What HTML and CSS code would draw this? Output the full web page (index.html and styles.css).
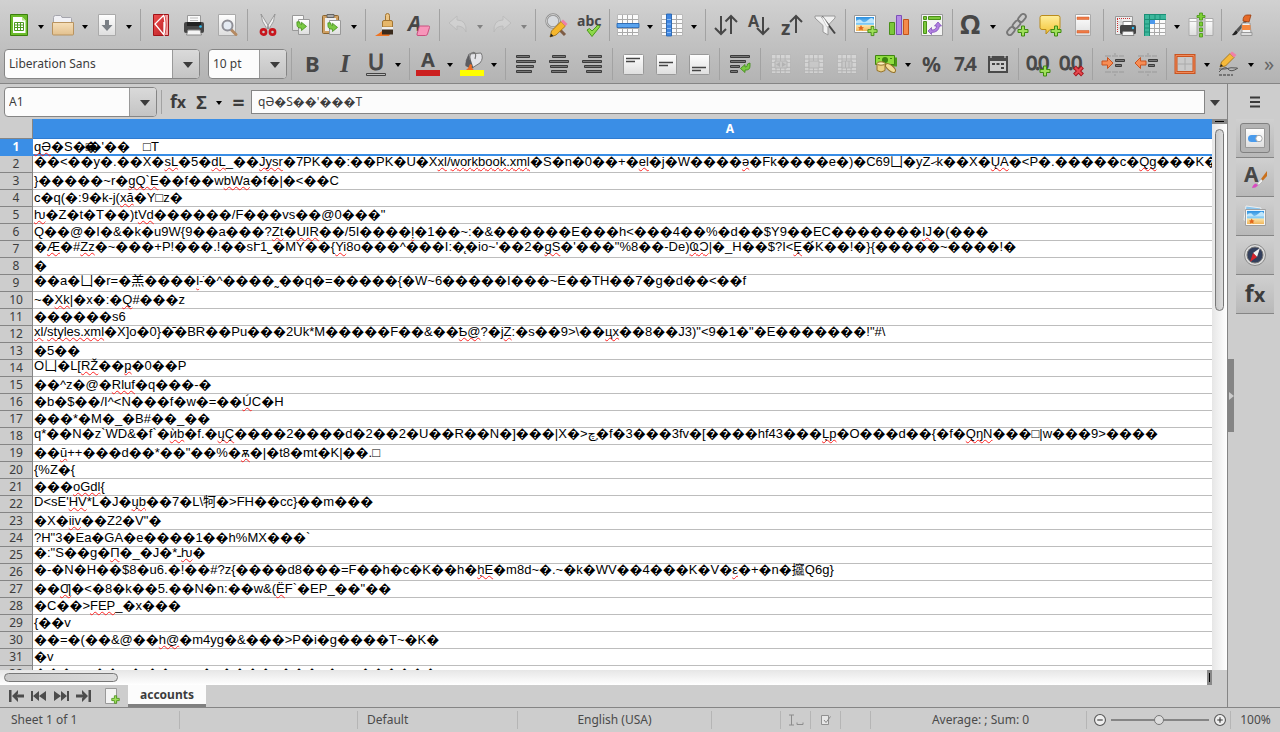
FILE: index.html
```html
<!DOCTYPE html>
<html lang="en">
<head>
<meta charset="utf-8">
<title>accounts - Calc</title>
<link rel="stylesheet" href="styles.css">
</head>
<body>
<svg class="defs" aria-hidden="true">
  <defs>
    <linearGradient id="paper" x1="0" y1="0" x2="0" y2="1"><stop offset="0" stop-color="#fff"/><stop offset="1" stop-color="#dedede"/></linearGradient>
    <linearGradient id="green" x1="0" y1="0" x2="0" y2="1"><stop offset="0" stop-color="#a8e05c"/><stop offset="1" stop-color="#5fae22"/></linearGradient>
    <linearGradient id="tan" x1="0" y1="0" x2="0" y2="1"><stop offset="0" stop-color="#f6dfba"/><stop offset="1" stop-color="#e2c08e"/></linearGradient>
    <linearGradient id="red" x1="0" y1="0" x2="1" y2="1"><stop offset="0" stop-color="#ef5050"/><stop offset="1" stop-color="#b51b20"/></linearGradient>
    <linearGradient id="sky" x1="0" y1="0" x2="0" y2="1"><stop offset="0" stop-color="#2b8fe0"/><stop offset=".55" stop-color="#8fd3f8"/><stop offset=".6" stop-color="#fbe3a6"/><stop offset="1" stop-color="#f0b65c"/></linearGradient>
    <linearGradient id="yellow" x1="0" y1="0" x2="0" y2="1"><stop offset="0" stop-color="#ffee9a"/><stop offset="1" stop-color="#f3c437"/></linearGradient>
    <symbol id="plus" viewBox="0 0 12 12"><path d="M4.500 1h3v3.500h3.500v3h-3.500v3.500h-3v-3.500h-3.500v-3h3.500z" fill="#9fe05a" stroke="#3f8a10"/></symbol>
    <symbol id="grid" viewBox="0 0 22 22"><path d="M.5.5h21v21h-21z" fill="#a9a9a9"/><path d="M1 1h4v4H1zM6 1h4v4H6zM11 1h4v4h-4zM16 1h5v4h-5zM1 6h4v3H1zM6 6h4v3H6zM11 6h4v3h-4zM16 6h5v3h-5zM1 10h4v4H1zM6 10h4v4H6zM11 10h4v4h-4zM16 10h5v4h-5zM1 15h4v3H1zM6 15h4v3H6zM11 15h4v3h-4zM16 15h5v3h-5zM1 19h4v2H1zM6 19h4v2H6zM11 19h4v2h-4zM16 19h5v2h-5z" fill="#fafafa"/></symbol>
    <symbol id="picture" viewBox="0 0 22 18"><path d="M.5.5h21v17h-21z" fill="#fff" stroke="#999"/><path d="M2 2h18v14H2z" fill="url(#sky)"/><path d="M2 6q4-3 6 0t6-1t6 0v3H2z" fill="#bfe6fb"/><path d="M7 10l1 2 2 .5-1.500 1 .5 2-2-1-2 1 .5-2-1.500-1 2-.5z" fill="#e2661b"/></symbol>
    <symbol id="arrow-green" viewBox="0 0 12 12"><path d="M1 2v3q0 4 5 4v2.500l5.500-4.500-5.500-4.500v2.500q-2 0-2-3z" fill="#7ac943" stroke="#3c8a12" stroke-width=".8"/></symbol>
  </defs>
</svg>

<header class="toolbars">
  <div class="toolbar" role="toolbar" aria-label="Standard">
    <button class="main" aria-label="New"><svg viewBox="0 0 24 24"><path d="M3.500 1.500h17v21h-17z" fill="#6cbc2b" stroke="#3b7f0d"/><path d="M6 4h9l3.500 3.500V20H6z" fill="#fff"/><path d="M15 4v3.500h3.500z" fill="#b8e68a"/><path d="M7.500 9.500h9v8h-9zM7.500 12h9M7.500 14.500h9M10.500 9.500v8M13.500 9.500v8" fill="none" stroke="#4f9a22"/></svg></button><button class="drop" aria-label="Templates"></button>
    <button class="main" aria-label="Open"><svg viewBox="0 0 24 24"><path d="M2.500 21V4.500q0-2 2-2h5q1 0 1.500 2h8.500q1 0 1 1V14z" fill="#f1f1f5" stroke="#a5a5ad"/><path d="M1.500 9.500h21V21q0 1-1 1h-19q-1 0-1-1z" fill="url(#tan)" stroke="#b8935f"/></svg></button><button class="drop" aria-label="Recent files"></button>
    <button class="main" aria-label="Save"><svg viewBox="0 0 24 24"><path d="M3.500 1.500h17v21h-17z" fill="url(#paper)" stroke="#aaa"/><path d="M10 7h4v5h3.500L12 18l-5.500-6H10z" fill="#7a7f85"/></svg></button><button class="drop" aria-label="Save as"></button>
    <i class="sep"></i>
    <button aria-label="Export as PDF"><svg viewBox="0 0 24 24"><path d="M4.500 1.500h15v21h-15z" fill="url(#red)" stroke="#a01318"/><path d="M15 2l-9 9 9 11V9M15 3c1.500 7 1.500 12 0 18" fill="none" stroke="#fff" stroke-width="1.300"/><path d="M16 2q3 10 0 20h3V2z" fill="#f2a0a0"/></svg></button>
    <button aria-label="Print"><svg viewBox="0 0 24 24"><path d="M5.500 2.500h13v8h-13z" fill="#fafafa" stroke="#999"/><path d="M8 5h8M8 7.500h8" stroke="#bbb"/><rect x="2" y="9" width="20" height="11" rx="2" fill="#454545"/><path d="M5 9h14v4H5z" fill="#222"/><circle cx="18.500" cy="13.500" r="1.300" fill="#2fc0f5"/><path d="M6 17h12l1.500 5h-15z" fill="#f5f5f5" stroke="#888"/></svg></button>
    <button aria-label="Print preview"><svg viewBox="0 0 24 24"><path d="M3.500 1.500h17v21h-17z" fill="url(#paper)" stroke="#aaa"/><path d="M16.500 17l4.500 4.500" stroke="#b58a62" stroke-width="3" stroke-linecap="round"/><circle cx="12.500" cy="12.500" r="5" fill="#e4eaf2" stroke="#8f8f96" stroke-width="2"/></svg></button>
    <i class="sep"></i>
    <button aria-label="Cut"><svg viewBox="0 0 24 24"><path d="M5 1l8 13-2 2Q5 8 5 1zM19 1l-8 13 2 2q6-8 6-15z" fill="#f0f0f0" stroke="#8a8a8a" stroke-width=".8"/><circle cx="7.500" cy="19" r="2.600" fill="none" stroke="#c8161d" stroke-width="2.600"/><circle cx="16.500" cy="19" r="2.600" fill="none" stroke="#c8161d" stroke-width="2.600"/></svg></button>
    <button aria-label="Copy"><svg viewBox="0 0 24 24"><path d="M3.500 2.500h11v15h-11z" fill="url(#paper)" stroke="#999"/><path d="M9.500 6.500h11v15h-11z" fill="url(#paper)" stroke="#999"/><use href="#arrow-green" x="7" y="7" width="11" height="11"/></svg></button>
    <button class="main" aria-label="Paste"><svg viewBox="0 0 24 24"><rect x="2.500" y="2.500" width="16" height="18" rx="1" fill="#cfa062" stroke="#8a6430"/><path d="M5 5h11v13H5z" fill="#eee"/><path d="M7 1.500h7v3H7z" fill="#aaa" stroke="#666"/><path d="M9.500 7.500h11v14h-11z" fill="url(#paper)" stroke="#999"/><use href="#arrow-green" x="7" y="8" width="11" height="11"/></svg></button><button class="drop" aria-label="Paste special"></button>
    <i class="sep"></i>
    <button aria-label="Clone formatting"><svg viewBox="0 0 24 24"><path d="M1 23q5-3 7-5h10l-3 5z" fill="#ef7423"/><rect x="11.500" y=".5" width="4" height="10" rx="2" fill="#ecc585" stroke="#a17433"/><path d="M8.500 9q0-1.500 1.500-1.500h7q1.500 0 1.500 1.500v5h-10z" fill="#e6b76a" stroke="#a17433"/><path d="M8 14h11v3H8z" fill="#eee"/><path d="M8 16.500h11v5H8z" fill="#3a2a1c"/></svg></button>
    <button aria-label="Clear formatting"><svg viewBox="0 0 24 24"><text x="1" y="18" class="glyph ital" font-size="21">A</text><path d="M13 13h8.500q1.500 0 1 1.500L20.500 21q-.5 1.500-2 1.500H11q-1.500 0-1-1.500l2-6.500q0-1.500 1-1.500z" fill="#f796ba" stroke="#c9507f"/></svg></button>
    <i class="sep"></i>
    <button class="main faded" aria-label="Undo" disabled><svg viewBox="0 0 24 24"><path d="M3 10l8-7v4q10 0 9 12-2-6-9-6v4z" fill="#ddd" stroke="#aaa"/></svg></button><button class="drop dim" aria-label="Undo list" disabled></button>
    <button class="main faded" aria-label="Redo" disabled><svg viewBox="0 0 24 24"><path d="M21 10l-8-7v4Q3 7 4 19q2-6 9-6v4z" fill="#ddd" stroke="#aaa"/></svg></button><button class="drop dim" aria-label="Redo list" disabled></button>
    <i class="sep"></i>
    <button aria-label="Find and replace"><svg viewBox="0 0 24 24"><path d="M14 15l7 7" stroke="#7d5c45" stroke-width="3"/><circle cx="9" cy="8" r="6.500" fill="#d7dade" stroke="#8e8e8e" stroke-width="2.400"/><circle cx="9" cy="8" r="6.500" fill="none" stroke="#ddd" stroke-width=".8"/><path d="M6 24l1.500-6L17 8.500l4.500 4.500L12 22z" fill="#f5b62c" stroke="#9a6a0c" stroke-width=".8"/><path d="M17 8.500l2-2 4.500 4.500-2 2z" fill="#f07fa8"/><path d="M6 24l1-3.500 2.500 2.500z" fill="#222"/></svg></button>
    <button aria-label="Spelling"><svg class="wide" viewBox="0 0 26 24"><text x="1" y="13" class="glyph" font-size="14">abc</text><path d="M11 17l2.500-1.500 2.500 2.500 6-6 2 1.500-8 10z" fill="#8ed94a" stroke="#4a9a18"/></svg></button>
    <i class="sep"></i>
    <button class="main" aria-label="Row"><svg viewBox="0 0 24 24"><use href="#grid" x="1" y="1" width="22" height="22"/><path d="M1 10.500h22v4H1z" fill="#5aa4ef" stroke="#1d5fb0" stroke-width=".8"/></svg></button><button class="drop" aria-label="Row menu"></button>
    <button class="main" aria-label="Column"><svg viewBox="0 0 24 24"><use href="#grid" x="1" y="1" width="22" height="22"/><path d="M6.500 1h5v22h-5z" fill="#3f86e2" stroke="#1d5fb0" stroke-width=".8"/><path d="M7 6.500h4M7 11h4M7 15.500h4M7 19.500h4" stroke="#8fc0f8"/></svg></button><button class="drop" aria-label="Column menu"></button>
    <i class="sep"></i>
    <button aria-label="Sort"><svg viewBox="0 0 24 24"><path class="line" d="M7 3v18M1 15l6 6 5-5M17 21V3M11.500 8.500L17 3l6 6"/></svg></button>
    <button aria-label="Sort ascending"><svg viewBox="0 0 24 24"><text x="1" y="14" class="glyph" font-size="16">A</text><path class="line" d="M16 4v17M10 15l6 6 6-6"/></svg></button>
    <button aria-label="Sort descending"><svg viewBox="0 0 24 24"><text x="1" y="22" class="glyph" font-size="19">z</text><path class="line" d="M16 20V3M10 9l6-6 6 6"/></svg></button>
    <button aria-label="AutoFilter"><svg viewBox="0 0 24 24"><path d="M2 3h20v2l-7 7.500V22l-5-3v-6.500L2 5z" fill="#f1f1f1" stroke="#999"/><path d="M9 3.500l13 17" stroke="#444" stroke-width="2"/><path d="M8 3l3 2 5 8-2 1z" fill="#fff" stroke="#aaa" stroke-width=".5"/></svg></button>
    <i class="sep"></i>
    <button aria-label="Insert image"><svg viewBox="0 0 24 24"><use href="#picture" x="0" y="2" width="22" height="18"/><use href="#plus" x="13" y="12" width="11" height="12"/></svg></button>
    <button aria-label="Insert chart"><svg viewBox="0 0 24 24"><path d="M2.500 9.500h5v12h-5z" fill="#7cc83c" stroke="#4a9018"/><path d="M9.500 2.500h5v19h-5z" fill="#b58be6" stroke="#7c4fb8"/><path d="M16.500 6.500h5v15h-5z" fill="#f58b4c" stroke="#c2531a"/></svg></button>
    <button aria-label="Pivot table"><svg viewBox="0 0 24 24"><path d="M1.500 1.500h21v21h-21z" fill="#f4f4f4" stroke="#999"/><path d="M3.500 3.500h3v3h-3zM8.500 3.500h12v3h-12zM3.500 8.500h3v12h-3z" fill="#7cc83c" stroke="#4a9018"/><path d="M18 9l-3.500 4h2q0 4-5 4v-2.500L8 18l3.500 3.500V19.500q7 0 8-6.500h2z" fill="#b07fe0" stroke="#7a45b5" stroke-width=".7"/></svg></button>
    <i class="sep"></i>
    <button class="main" aria-label="Special character"><svg viewBox="0 0 24 24"><text x="1" y="21" class="glyph" font-size="27">Ω</text></svg></button><button class="drop" aria-label="Recent characters"></button>
    <button aria-label="Insert hyperlink"><svg viewBox="0 0 24 24"><g fill="none" stroke="#777" stroke-width="1.800"><rect x="-4.500" y="-2.700" width="9" height="5.400" rx="2.700" transform="translate(17 5) rotate(-50)"/><rect x="-4.500" y="-2.700" width="9" height="5.400" rx="2.700" transform="translate(11.500 11.500) rotate(-50)"/><rect x="-4.500" y="-2.700" width="9" height="5.400" rx="2.700" transform="translate(6 18) rotate(-50)"/></g><use href="#plus" x="12" y="12" width="12" height="12"/></svg></button>
    <button aria-label="Insert comment"><svg viewBox="0 0 24 24"><path d="M4 2.500h16q2 0 2 2v10q0 2-2 2h-8L8 21v-4.500H4q-2 0-2-2v-10q0-2 2-2z" fill="url(#yellow)" stroke="#b98b1c"/><use href="#plus" x="12" y="12" width="12" height="12"/></svg></button>
    <button aria-label="Headers and footers"><svg viewBox="0 0 24 24"><path d="M4.500 1.500h15v21h-15z" fill="url(#paper)" stroke="#aaa"/><path d="M6 4h12v2.500H6zM6 17.500h12V20H6z" fill="#ef7a45" stroke="#cf5a25" stroke-width=".5"/></svg></button>
    <i class="sep"></i>
    <button aria-label="Define print area"><svg viewBox="0 0 24 24"><path d="M3.500 3.500h17v18h-17z" fill="#eee" stroke="#999"/><path d="M5 5.500h14M5.500 6v14" stroke="#c33" stroke-dasharray="1 1"/><path d="M6 9h12M6 12h12M6 15h12M9 6v14" stroke="#ccc"/><path d="M11 8.500h9v5h-9z" fill="#fff" stroke="#888"/><rect x="8" y="12" width="16" height="9" rx="1.500" fill="#454545"/><circle cx="21" cy="15" r="1.200" fill="#2fc0f5"/><path d="M11 18.500h10l1 4H10z" fill="#f5f5f5" stroke="#888"/></svg></button>
    <button class="main" aria-label="Freeze panes"><svg viewBox="0 0 24 24"><use href="#grid" x="1" y="1" width="22" height="22"/><path d="M1 1h22v5.500H6.500V23H1z" fill="#3cb79c"/><path d="M1 1.500h22M1 6.500h22M1.500 1v22M6.500 1v22M12 1v5M17 1v5M1 11h5M1 15h5M1 19h5" stroke="#1b8f76" fill="none"/><path d="M7 7h5v4H7z" fill="#4b98ec"/></svg></button><button class="drop" aria-label="Freeze menu"></button>
    <button aria-label="Split window"><svg viewBox="0 0 24 24"><path d="M0 5.500h8v17H0zM16 5.500h8v17h-8z" fill="url(#paper)" stroke="#aaa"/><path d="M0 8.500h8M16 8.500h8" stroke="#bbb"/><path d="M10.500 9h3v4h-3zM10.500 15h3v3.500h-3zM10.500 20.500h3V24h-3zM10.500 0h3v2.500H16v2h-2.500V7h-3V4.500H8v-2h2.500z" fill="#7ccf35" stroke="#489414" stroke-width=".8"/></svg></button>
    <i class="sep"></i>
    <button aria-label="Show draw functions"><svg viewBox="0 0 24 24"><path d="M2 22l4-5 2 2q-2 4-6 3z" fill="#222"/><path d="M6 17L17 5l2 1L8.500 19z" fill="#555"/><path d="M13 8q0-6 4-6h4l-2 7z" fill="#e66a28" stroke="#9b3b0c" stroke-width=".8"/><path d="M12 10h8l1 10h-9z" fill="#f3f3f3" stroke="#999"/><path d="M12 12h8.500v5H12z" fill="#f5873e"/><path d="M11 19.500h11v3H11z" fill="#ddd" stroke="#999"/></svg></button>
  </div>

  <div class="toolbar" role="toolbar" aria-label="Formatting">
    <label class="combo font-name"><select aria-label="Font name"><option>Liberation Sans</option></select><span class="tri"></span></label>
    <label class="combo font-size"><select aria-label="Font size"><option>10 pt</option></select><span class="tri"></span></label>
    <i class="sep"></i>
    <button aria-label="Bold"><svg viewBox="0 0 24 24"><text x="5" y="20" class="glyph" font-size="22">B</text></svg></button>
    <button aria-label="Italic"><svg viewBox="0 0 24 24"><text x="7" y="20" class="glyph serif" font-size="25">I</text></svg></button>
    <button class="main" aria-label="Underline"><svg viewBox="0 0 24 24"><text x="4" y="18" class="glyph reg" font-size="22">U</text><path d="M2.500 21.500h19v2h-19z" fill="#bbb" stroke="#444"/></svg></button><button class="drop" aria-label="Underline menu"></button>
    <i class="sep"></i>
    <button class="main" aria-label="Font color"><svg viewBox="0 0 24 24"><text x="5" y="15" class="glyph" font-size="20">A</text><path d="M0 18h24v6H0z" fill="#cc1f1f"/></svg></button><button class="drop" aria-label="Font colors"></button>
    <button class="main" aria-label="Background color"><svg viewBox="0 0 24 24"><path d="M9 2l12-1q3 5-1 10l-8 5L6 9z" fill="#e4e4e8" stroke="#777"/><path d="M9 2l-3 7q-1 3-.5 5 5 3 8 2l-3-9z" fill="#5c5c60"/><path d="M10 8q-1-7 3-7.500t2 6.500" fill="none" stroke="#777" stroke-width="1.200"/><path d="M10 12q-1 4-4 6h8q-3-2-2-5z" fill="#ef6b23"/><path d="M0 18h24v6H0z" fill="#ff0"/></svg></button><button class="drop" aria-label="Background colors"></button>
    <i class="sep"></i>
    <button aria-label="Align left"><svg viewBox="0 0 24 24"><path class="bar" d="M2.500 3.500h13v2h-13zM2.500 8.500h19v2h-19zM2.500 13.500h17v2h-17zM2.500 18.500h15v2h-15z"/></svg></button>
    <button aria-label="Center"><svg viewBox="0 0 24 24"><path class="bar" d="M5.500 3.500h13v2h-13zM2.500 8.500h19v2h-19zM3.500 13.500h17v2h-17zM4.500 18.500h15v2h-15z"/></svg></button>
    <button aria-label="Align right"><svg viewBox="0 0 24 24"><path class="bar" d="M8.500 3.500h13v2h-13zM2.500 8.500h19v2h-19zM4.500 13.500h17v2h-17zM6.500 18.500h15v2h-15z"/></svg></button>
    <i class="sep"></i>
    <button aria-label="Align top"><svg viewBox="0 0 24 24"><rect x="2.500" y="2.500" width="20" height="20" rx="1" fill="url(#paper)" stroke="#999"/><path d="M5 6.500h14M5 9.500h9" stroke="#444" stroke-width="1.500"/></svg></button>
    <button aria-label="Center vertically"><svg viewBox="0 0 24 24"><rect x="2.500" y="2.500" width="20" height="20" rx="1" fill="url(#paper)" stroke="#999"/><path d="M5 10.500h14M5 13.500h9" stroke="#444" stroke-width="1.500"/></svg></button>
    <button aria-label="Align bottom"><svg viewBox="0 0 24 24"><rect x="2.500" y="2.500" width="20" height="20" rx="1" fill="url(#paper)" stroke="#999"/><path d="M5 15.500h14M5 18.500h9" stroke="#444" stroke-width="1.500"/></svg></button>
    <i class="sep"></i>
    <button aria-label="Wrap text"><svg viewBox="0 0 24 24"><path class="bar" d="M2.500 3.500h19v2h-19zM2.500 8.500h15v2h-15zM2.500 13.500h9v2h-9zM2.500 18.500h7v2h-7z"/><path d="M22 11v3q0 4.500-5 4v2.500L12.500 16.500l4.500-4v2.500q2.500.5 2.500-3z" fill="#7ac943" stroke="#3c8a12" stroke-width=".8"/></svg></button>
    <i class="sep"></i>
    <button class="faded" aria-label="Merge and center cells" disabled><svg viewBox="0 0 24 24"><use href="#grid" x="2" y="2" width="20" height="20"/><path d="M6 9h12v7H6z" fill="#ddd" stroke="#aaa"/><path d="M11 10v5l-4-2.500zM13 10v5l4-2.500z" fill="#aaa"/></svg></button>
    <button class="faded" aria-label="Merge cells" disabled><svg viewBox="0 0 24 24"><use href="#grid" x="2" y="2" width="20" height="20"/><path d="M7 9h10v7H7z" fill="#ddd" stroke="#aaa"/></svg></button>
    <button class="faded" aria-label="Split cells" disabled><svg viewBox="0 0 24 24"><use href="#grid" x="2" y="2" width="20" height="20"/><path d="M7 9h10v7H7zM10.500 9v7M14 9v7" fill="#ddd" stroke="#aaa"/></svg></button>
    <i class="sep"></i>
    <button class="main" aria-label="Currency"><svg viewBox="0 0 24 24"><path d="M3 5.500h20v9H3z" fill="#4c9a1a"/><path d="M1.500 3.500h19v9h-19z" fill="#8fdd3f" stroke="#3d8410"/><circle cx="11" cy="8" r="3" fill="#3d8410"/><path d="M4 6.500h2M16 6.500h2" stroke="#3d8410"/><path d="M3 11.500v7q4 3 8 0v-7z" fill="#ecd184" stroke="#94722a"/><ellipse cx="7" cy="11.500" rx="4" ry="1.700" fill="#fbf0c0" stroke="#94722a"/><ellipse cx="16.500" cy="16" rx="6" ry="2.700" transform="rotate(40 16.500 16)" fill="#f2dc98" stroke="#94722a"/></svg></button><button class="drop" aria-label="Currency menu"></button>
    <button aria-label="Percent"><svg viewBox="0 0 24 24"><text x="2" y="20" class="glyph" font-size="21">%</text></svg></button>
    <button aria-label="Number"><svg class="wide" viewBox="0 0 26 24"><text x="2 11 14" y="19" class="glyph" font-size="19">7.4</text></svg></button>
    <button aria-label="Date"><svg viewBox="0 0 24 24"><path d="M2 4h20v17H2z" fill="#4a4a4a"/><path d="M4 9h16v10H4z" fill="#ccc"/><path d="M5 3v3M19 3v3" stroke="#ddd"/><path d="M6 11h3v2H6zM10.500 11h3v2h-3zM15 11h3v2h-3zM15 15h3v2h-3z" fill="#444"/></svg></button>
    <i class="sep"></i>
    <button aria-label="Add decimal place"><svg class="wide" viewBox="0 0 26 24"><text x="0 9 12" y="18" class="glyph reg" font-size="20">0.0</text><use href="#plus" x="13" y="13" width="12" height="12"/></svg></button>
    <button aria-label="Delete decimal place"><svg class="wide" viewBox="0 0 26 24"><text x="0 9 12" y="18" class="glyph reg" font-size="20">0.0</text><path d="M15.500 15l8 8M23.500 15l-8 8" stroke="#a3121a" stroke-width="4"/><path d="M16 15.500l7 7M23 15.500l-7 7" stroke="#e5484e" stroke-width="2.200"/></svg></button>
    <i class="sep"></i>
    <button aria-label="Increase indent"><svg viewBox="0 0 24 24"><path d="M4 4h19M4 20h19M14 1v2M14 22v2" stroke="#999" stroke-dasharray="6 1"/><path class="bar" d="M14.500 7.500h9v2h-9zM14.500 12.500h6v2h-6z"/><path d="M1 9h5.500V5.500L12 11l-5.500 5.500V13H1z" fill="#f78d55" stroke="#c85320"/></svg></button>
    <button aria-label="Decrease indent"><svg viewBox="0 0 24 24"><path d="M4 4h19M4 20h19M14 1v2M14 22v2" stroke="#999" stroke-dasharray="6 1"/><path class="bar" d="M14.500 7.500h9v2h-9zM14.500 12.500h6v2h-6z"/><path d="M12 9H6.500V5.500L1 11l5.500 5.500V13H12z" fill="#f78d55" stroke="#c85320"/></svg></button>
    <i class="sep"></i>
    <button class="main" aria-label="Borders"><svg viewBox="0 0 24 24"><path d="M3 3.500h18v17H3z" fill="#c9c9c9" stroke="#c95420" stroke-width="3"/><path d="M3 3.500h18v17H3z" fill="none" stroke="#f18a5a"/><path d="M12 6v12M5 12h14" stroke="#aaa"/></svg></button><button class="drop" aria-label="Border styles"></button>
    <button class="main" aria-label="Border line"><svg viewBox="0 0 24 24"><path d="M2 20q6-7 9-3t10-1M2 17h6q6-2 12-1" fill="none" stroke="#555"/><path d="M2 23h14" stroke="#333" stroke-dasharray="3 1"/><path d="M3 15l1.500-5L13 1.500l4 4L8.500 14z" fill="#f5b93a" stroke="#9a6a0c" stroke-width=".8"/><path d="M13 1.500l2-2 4.500 3.500-2.500 2.500z" fill="#f07fa8"/><path d="M3 15l1-3 2 2z" fill="#222"/></svg></button><button class="drop" aria-label="Border lines"></button>
    <button class="more" aria-label="More controls">»</button>
  </div>
</header>

<div class="workspace">
  <main class="document">
    <div class="formula-bar">
      <div class="combo name-box"><input type="text" value="A1" aria-label="Name box"><button class="tri" aria-label="Named ranges"></button></div>
      <i class="sep"></i>
      <button class="fn" aria-label="Function wizard">f<small>x</small></button>
      <button class="fn sum" aria-label="Select function">Σ</button><button class="drop" aria-label="Function list"></button>
      <button class="fn eq" aria-label="Formula">=</button>
      <input class="formula" type="text" value="qƏ�S��'���T" aria-label="Input line">
      <button class="expand" aria-label="Expand formula bar"></button>
    </div>

    <div class="sheet">
      <div class="view">
        <table class="grid">
          <colgroup><col class="col-num"><col class="col-a"></colgroup>
          <thead><tr><th class="corner"></th><th class="active" scope="col">A</th></tr></thead>
          <tbody>
            <tr class="current"><th scope="row">1</th><td><u>qƏ</u>�S�<span class="over">□</span><span class="over">�</span>�'��&emsp;□T</td></tr>
            <tr class="high"><th scope="row">2</th><td>��&lt;��y�.��X�<u>sL</u>�5�<u>dL</u>_��<u>Jysr</u>�7PK��:��PK�U�X<u>xl</u>/<u>workbook.xml</u>�S�n�0��+�<u>el</u>�j�W����<u>ə</u>�Fk����e�)�C69<span class="cjk">凵</span>�yZޙk��X�<u>ŲA</u>�&lt;P�.�����c�<u>Qg</u>���K��</td></tr>
            <tr><th scope="row">3</th><td>}�����~r�<u>gQ`E</u>��f��w<u>bWa</u>�f�|�&lt;��C</td></tr>
            <tr><th scope="row">4</th><td>c�q(�:9�k-j(<u>xă</u>�Y□z�</td></tr>
            <tr><th scope="row">5</th><td><u>ƕ</u>�Z�t�T��)t<u>Vd</u>������/F���vs��@0���"</td></tr>
            <tr><th scope="row">6</th><td>Q��@�I�&amp;�k�u9W{9��a���?<u>Zt</u>�<u>UIR</u>��/5I����<u>ļ</u>�1��~:�&amp;������E���h&lt;���4��%�d��$Y9��EC�������<u>IJ</u>�(���</td></tr>
            <tr class="high"><th scope="row">7</th><td>�<u>Æ</u>�#<u>Zz</u>�~���+P!���.!��sՒ1˽�MY��{<u>Yi</u>8o���^���I:�̨�io~'��2�<u>gS</u>�'���"%8��-De)<u>ҨϽ</u>|�_H��$?I&lt;<u>Ȩ</u>�́K��!�}{�����~����!�</td></tr>
            <tr><th scope="row">8</th><td>�</td></tr>
            <tr class="high"><th scope="row">9</th><td>��a�<span class="cjk">凵</span>�r=�<span class="cjk">羔</span>����<u>l</u>-̇�^����˷��q�=�����{�W~6�����I���~E��TH��7�g�d��&lt;��f</td></tr>
            <tr><th scope="row">10</th><td>~�<u>Xk</u>|�x�:�<u>Q</u>#���z</td></tr>
            <tr><th scope="row">11</th><td>������s6</td></tr>
            <tr class="high"><th scope="row">12</th><td><u>xl</u>/<u>styles.xml</u>�X]o�0}�̄�BR��Pu���2Uk*M�����F��&amp;��<u>Ҍ@</u>?�j<u>Z</u>:�s��9&gt;\��<u>цx</u>��8��J3)"&lt;9�1�"�E�������!"#\</td></tr>
            <tr><th scope="row">13</th><td>�5��</td></tr>
            <tr class="high"><th scope="row">14</th><td>O<span class="cjk">凵</span>�L[<u>RŽ</u>��<u>ҏ</u>�0��P</td></tr>
            <tr><th scope="row">15</th><td>��^z�@�<u>Rluf</u>�q���-�</td></tr>
            <tr><th scope="row">16</th><td>�b�$��/I^&lt;N���f�w�=��<u>Ú</u>C�H</td></tr>
            <tr><th scope="row">17</th><td>���*�M�_�B#��_��</td></tr>
            <tr class="high"><th scope="row">18</th><td>q*��N�z`WD&amp;�f`�<u>ѝb</u>�f.�<u>ųÇ</u>����2����d�2��2�U��R��N�]���|X�&gt;<bdi>ۭچ</bdi>�f�3���3fv�[����hf43���<u>Ļp</u>�O���d��{�f�<u>QŋN</u>���□|w���9&gt;����</td></tr>
            <tr><th scope="row">19</th><td>��<u>ū</u>++���d��*��"��%�<u>ѫ</u>�|�t8�mt�K|��.□</td></tr>
            <tr><th scope="row">20</th><td>{%Z�{</td></tr>
            <tr><th scope="row">21</th><td>���<u>oGdl</u>{</td></tr>
            <tr class="high"><th scope="row">22</th><td>D&lt;sE'<u>HV</u>*L�J�<u>ųb</u>��7�L\<span class="cjk">牱</span>�&gt;FH��cc}��m���</td></tr>
            <tr><th scope="row">23</th><td>�X�<u>iiv</u>��Z2�V"�</td></tr>
            <tr><th scope="row">24</th><td>?H"3�Ea�GA�e����1��h%MX���`</td></tr>
            <tr class="high"><th scope="row">25</th><td>�:"S��g�<u>П</u>�_�J�*<bdi>ـ</bdi><u>ƕ</u>�</td></tr>
            <tr class="high"><th scope="row">26</th><td>�-�N�H��$8�u6.�!��#?z{����d8���=F��h�c�K��h�<u>ḥE</u>�m8d~�.~�k�WV��4���K�V�<u>ε</u>�+�n�<span class="cjk">攨</span>Q6g}</td></tr>
            <tr><th scope="row">27</th><td>��<u>Ƣ</u>�&lt;�8�k��5.��N�n:��w&amp;(<u>Ë</u>F`�EP_��"��</td></tr>
            <tr><th scope="row">28</th><td>�C��&gt;<u>FEP</u>_�x���</td></tr>
            <tr><th scope="row">29</th><td>{��v</td></tr>
            <tr><th scope="row">30</th><td>��=�(��&amp;@��<u>h@</u>�m4yg�&amp;���&gt;P�i�g����T~�K�</td></tr>
            <tr><th scope="row">31</th><td>�v</td></tr>
            <tr><th scope="row">32</th><td>���avc��x.�.��aaac�a����a���a�avc������</td></tr>
          </tbody>
        </table>
      </div>
      <div class="vscroll"><span class="splitter"></span><span class="thumb"></span></div>
      <div class="hscroll"><span class="thumb"></span><span class="splitter"></span></div>
    </div>

    <nav class="tabs" aria-label="Sheets">
      <button aria-label="First sheet"><svg viewBox="0 0 18 16"><path d="M1 2h2.500v12H1zM4 8l6-6v3.500L9 6.500h7v3H9l1 1V14z"/></svg></button>
      <button aria-label="Previous sheet"><svg viewBox="0 0 18 16"><path d="M1 3h2v10H1zM3 8l6-5v10zM9 8l7-5v10z"/></svg></button>
      <button aria-label="Next sheet"><svg viewBox="0 0 18 16"><path d="M17 3h-2v10h2zM15 8L9 3v10zM9 8L2 3v10z"/></svg></button>
      <button aria-label="Last sheet"><svg viewBox="0 0 18 16"><path d="M17 2h-2.500v12H17zM14 8L8 2v3.500l1 1H2v3h7l-1 1V14z"/></svg></button>
      <button class="add" aria-label="Add sheet"><svg viewBox="0 0 18 16"><path d="M3.500.5h11v15h-11z" fill="#f4f4f4" stroke="#999"/><use href="#plus" x="9" y="7" width="9" height="9"/></svg></button>
      <button class="tab">accounts</button>
    </nav>
  </main>

  <aside class="sidebar" aria-label="Sidebar">
    <button class="handle" aria-label="Hide sidebar"></button>
    <div class="deck">
      <button class="menu" aria-label="Sidebar settings"><svg viewBox="0 0 12 12"><path d="M1 1.500h10M1 6h10M1 10.500h10" stroke="#3a3a3a" stroke-width="2"/></svg></button>
      <button class="deck-tab" aria-label="Properties"><span class="pressed"><svg viewBox="0 0 22 22"><path d="M1.500 1.500h19v19h-19z" fill="url(#paper)" stroke="#999"/><rect x="4" y="8" width="14" height="7" rx="3.500" fill="#4a9bec"/><circle cx="15" cy="11.500" r="3.200" fill="#fff" stroke="#aaa"/></svg></span></button>
      <button class="deck-tab" aria-label="Styles"><svg viewBox="0 0 24 24"><text x="1" y="17" class="glyph" font-size="21">A</text><path d="M18 14l6-8v5l-4.500 5z" fill="#c9701c"/><path d="M14 19l4-5 2 2-4 4z" fill="#eee" stroke="#999" stroke-width=".5"/><path d="M9 23q1-4 4-4.500l2 2q-2 2.500-6 2.500z" fill="#d94cc0"/></svg></button>
      <button class="deck-tab" aria-label="Gallery"><svg viewBox="0 0 24 24"><path d="M3 2l15 2-2 14L1 16z" fill="#8ac6ef" stroke="#eee"/><use href="#picture" x="2" y="5" width="21" height="17"/></svg></button>
      <button class="deck-tab" aria-label="Navigator"><svg viewBox="0 0 24 24"><circle cx="12" cy="12" r="10.500" fill="#ddd" stroke="#888"/><circle cx="12" cy="12" r="8" fill="#333f5c" stroke="#777"/><path d="M17 5l-3 9-4-4z" fill="#eee"/><path d="M7 19l3-9 4 4z" fill="#d8232a"/></svg></button>
      <button class="deck-tab fx" aria-label="Functions">f<small>x</small></button>
    </div>
  </aside>
</div>

<footer class="status">
  <span class="s-sheet">Sheet 1 of 1</span>
  <span class="s-find"></span>
  <span class="s-style">Default</span>
  <span class="s-lang">English (USA)</span>
  <span class="s-gap"></span>
  <span class="s-mode"><svg viewBox="0 0 16 12"><path d="M1 1h5M1 11h5M3.500 1v10M9 8.500v2h6v-2" fill="none" stroke="#8c8c8c"/></svg></span>
  <span class="s-sign"><svg viewBox="0 0 12 12"><path d="M1.500 1.500h7v9h-7z" fill="#e6e6e6" stroke="#909090"/><path d="M4 6l2 2.500 4.500-6" fill="none" stroke="#888"/></svg></span>
  <span class="s-gap2"></span>
  <span class="s-sum">Average: ; Sum: 0</span>
  <span class="s-zoom"><button aria-label="Zoom out"><svg viewBox="0 0 11 11"><circle cx="5.500" cy="5.500" r="5" fill="#eee" stroke="#555"/><path d="M3 5.500h5" stroke="#333"/></svg></button><input type="range" min="0" max="100" value="49" aria-label="Zoom"><button aria-label="Zoom in"><svg viewBox="0 0 11 11"><circle cx="5.500" cy="5.500" r="5" fill="#eee" stroke="#555"/><path d="M3 5.500h5M5.500 3v5" stroke="#333"/></svg></button></span>
  <span class="s-pct">100%</span>
</footer>
</body>
</html>
```

FILE: styles.css
```css
* { box-sizing: border-box; }

body {
  margin: 0;
  height: 100vh;
  display: flex;
  flex-direction: column;
  overflow: hidden;
  background: #cdcdcd;
  color: #3c3c3c;
  font: 12px/16px "Noto Sans", "DejaVu Sans", sans-serif;
}

button, input, select {
  margin: 0;
  padding: 0;
  border: 0;
  border-radius: 0;
  background: none;
  color: inherit;
  font: inherit;
}

.defs { position: absolute; width: 0; height: 0; }

.glyph { font-family: "Noto Sans", sans-serif; font-weight: 700; fill: #474747; }
.glyph.ital { font-style: italic; }
.glyph.reg { font-weight: 400; stroke: #474747; stroke-width: 1; }
.glyph.serif { font-family: "Liberation Serif", serif; font-style: italic; }
.line { fill: none; stroke: #474747; stroke-width: 2; }
.bar { fill: #777; stroke: #3c3c3c; }

/* Toolbars */
.toolbars {
  flex: none;
  padding: 6px 0 0 4px;
  border-bottom: 1px solid #858585;
  background: linear-gradient(#d1d1d1, #b3b3b3);
}
.toolbar { display: flex; align-items: center; height: 39px; overflow: hidden; }
.toolbar:first-child { height: 38px; }
.toolbar > * { flex: none; }
.toolbar button { width: 33px; height: 33px; display: grid; place-items: center; }
.toolbar .main { width: 30px; }
.toolbar svg { width: 24px; height: 24px; overflow: visible; }
.toolbar svg.wide { width: 26px; }
.toolbar .faded { opacity: 0.4; }
.toolbar .more { width: 22px; color: #666; font-size: 20px; }

.toolbar button.drop, button.drop { width: 14px; height: 30px; display: grid; place-items: center; }
button.drop::after {
  content: "";
  margin-top: 3px;
  border: 3px solid transparent;
  border-top: 4px solid #000;
  border-bottom: 0;
}
button.drop.dim { opacity: 0.35; }

.sep { flex: none; width: 8px; height: 32px; display: flex; justify-content: center; }
.sep::before { content: ""; width: 1px; background: #a2a2a2; }

.combo {
  display: flex;
  height: 30px;
  overflow: hidden;
  border: 1px solid #858585;
  border-radius: 4px;
  background: #fcfcfc;
}
.combo select, .combo input {
  appearance: none;
  flex: 1;
  min-width: 0;
  padding: 0 4px;
  outline: 0;
}
.combo .tri {
  flex: none;
  display: grid;
  place-items: center;
  width: 27px;
  height: 100%;
  border-left: 1px solid #999;
  background: linear-gradient(#dadada, #c4c4c4);
}
.tri::after, .expand::after {
  content: "";
  margin: 2px 0 0 4px;
  border: 5px solid transparent;
  border-top: 6px solid #3c3c3c;
  border-bottom: 0;
}
.font-name { width: 196px; margin-right: 8px; }
.font-size { width: 79px; }

/* Formula bar */
.workspace { flex: 1; min-height: 0; display: flex; }
.document { flex: 1; min-width: 0; display: flex; flex-direction: column; }
.formula-bar { flex: none; display: flex; align-items: center; height: 35px; padding-left: 4px; }
.name-box { width: 153px; }
.formula-bar .sep { height: 24px; }
.fn { width: 26px; font-size: 18px; font-weight: 700; line-height: 28px; }
.fn small, .fx small { font-size: 16px; }
.fn.sum { width: 21px; }
.fn.eq { width: 25px; font-size: 21px; }
.formula {
  flex: 1;
  min-width: 0;
  height: 24px;
  padding: 0 6px;
  border: 1px solid #858585;
  background: #fcfcfc;
  outline: 0;
}
.expand { width: 22px; height: 24px; display: grid; place-items: center; padding-right: 6px; }

/* Sheet */
.sheet {
  flex: 1;
  min-height: 0;
  display: grid;
  grid-template: minmax(0, 1fr) 15px / minmax(0, 1fr) 15px;
}
.view { overflow: hidden; background: #fff; }
.grid { width: 1428px; table-layout: fixed; border-collapse: separate; border-spacing: 0; }
.col-num { width: 33px; }
.grid th, .grid td { height: 17px; padding: 0; white-space: nowrap; }
.grid thead th {
  height: 20px;
  border-right: 1px solid #858585;
  border-bottom: 1px solid #858585;
}
.grid .corner { background: #cdcdcd; }
.grid thead .active { border-color: #2f7bd0; background: #3a8ee6; color: #fff; }
.grid tbody th {
  border-right: 1px solid #858585;
  border-bottom: 1px solid #858585;
  background: #cdcdcd;
  font-weight: 400;
  line-height: 16px;
}
.grid tbody td {
  padding-left: 1px;
  border-bottom: 1px solid #bdbdbd;
  color: #000;
  font: 13px/16px "Liberation Sans", "Noto Sans", "DejaVu Sans", sans-serif;
}
.grid .high td { line-height: 12px; padding-bottom: 4px; }
.grid .current th { background: #3a8ee6; color: #fff; font-weight: 700; border-color: #3a8ee6; }
.grid .current td { border-bottom: 2px solid #3a8ee6; line-height: 15px; }
.grid u { text-decoration: underline wavy #f22 1px; text-underline-offset: 1px; text-decoration-skip-ink: none; }
.over { margin-right: -9px; }
.cjk { font-family: "Noto Sans CJK SC", sans-serif; line-height: 1px; }

.vscroll {
  display: flex;
  flex-direction: column;
  align-items: center;
  background: linear-gradient(90deg, #e6e6e6, #fff);
}
.thumb { border: 1px solid #777; border-radius: 5px; background: linear-gradient(90deg, #c8c8c8, #dcdcdc); }
.vscroll .thumb { width: 9px; height: 33%; margin-top: 5px; }
.splitter { background: #888; display: grid; place-items: center; }
.vscroll .splitter { width: 100%; height: 5px; }
.vscroll .splitter::after { content: ""; width: 9px; height: 1px; background: #000; }
.hscroll {
  display: flex;
  align-items: center;
  justify-content: space-between;
  padding-left: 4px;
  background: linear-gradient(#e6e6e6, #fff);
}
.hscroll .thumb { width: 114px; height: 9px; }
.hscroll .splitter { width: 5px; height: 100%; }
.hscroll .splitter::after { content: ""; width: 1px; height: 9px; background: #000; }

/* Sheet tabs */
.tabs { flex: none; display: flex; align-items: center; height: 22px; padding-left: 6px; }
.tabs button { width: 22px; height: 22px; display: grid; place-items: center; }
.tabs svg { width: 18px; height: 16px; fill: #4c4c4c; }
.tabs .add { width: 34px; }
.tabs .tab { width: 78px; border-bottom: 3px solid #808080; background: #fcfcfc; font-weight: 700; }

/* Sidebar */
.sidebar { flex: none; display: flex; width: 53px; border-left: 1px solid #858585; }
.handle { align-self: center; width: 6px; height: 73px; background: #858585; display: grid; place-items: center; }
.handle::after { content: ""; border: 4px solid transparent; border-left: 5px solid #ccc; border-right: 0; }
.deck { flex: 1; padding: 0 6px 0 2px; }
.deck button { display: grid; place-items: center; width: 100%; }
.deck .menu { height: 35px; }
.menu svg { width: 12px; height: 12px; }
.deck .deck-tab { height: 39px; border-bottom: 1px solid #858585; background: linear-gradient(#d0d0d0, #b8b8b8); }
.deck-tab svg { width: 24px; height: 24px; }
.pressed { display: grid; place-items: center; width: 30px; height: 30px; border: 1px solid #808080; border-radius: 3px; background: #b4b4b4; }
.pressed svg { width: 22px; height: 22px; }
.deck .fx { display: block; font-size: 23px; font-weight: 700; line-height: 36px; }
.deck .fx small { font-size: 20px; }

/* Status bar */
.status { flex: none; display: flex; align-items: center; height: 25px; border-top: 1px solid #858585; color: #4a4a4a; }
.status > span { display: flex; align-items: center; justify-content: center; height: 18px; border-right: 1px solid #b5b5b5; }
.status svg { width: 16px; height: 12px; }
.status .s-sheet { width: 180px; justify-content: flex-start; padding-left: 11px; }
.status .s-find { width: 178px; }
.status .s-style { width: 160px; justify-content: flex-start; padding-left: 9px; }
.status .s-lang { width: 194px; }
.status .s-gap { width: 69px; }
.status .s-mode { width: 30px; }
.status .s-sign { width: 30px; }
.status .s-gap2 { width: 30px; }
.status .s-sum { flex: 1; padding-left: 4px; }
.status .s-zoom { width: 144px; gap: 5px; padding-left: 2px; }
.status .s-pct { width: 49px; border-right: 0; }
.s-zoom button { width: 12px; height: 12px; display: grid; }
.status .s-zoom svg { width: 12px; height: 12px; }
.s-zoom input { appearance: none; width: 98px; height: 12px; background: linear-gradient(#858585, #858585) center / 100% 2px no-repeat; }
.s-zoom input::-webkit-slider-thumb {
  appearance: none;
  width: 10px;
  height: 10px;
  border: 1px solid #777;
  border-radius: 50%;
  background: #ddd;
}
```
